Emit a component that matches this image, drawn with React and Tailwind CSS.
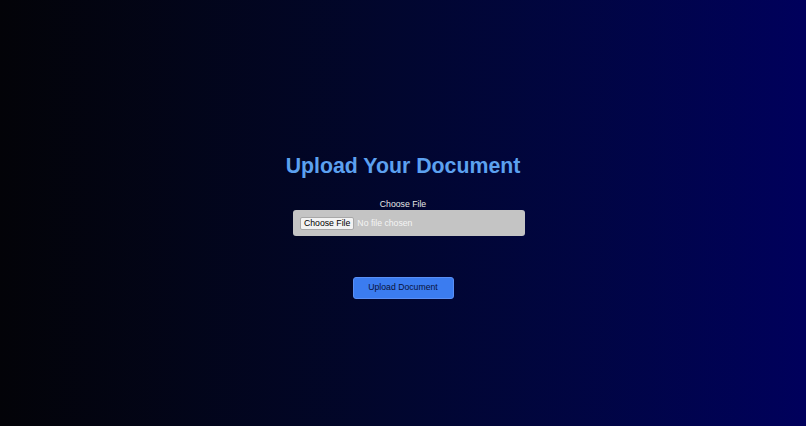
export default function App() {
    return (
        <div className="min-h-screen w-full bg-gradient-to-r from-[#030308] to-[#00005c] flex flex-col items-center justify-center pt-[27px] font-['Liberation_Sans',Arial,sans-serif]">
            <div className="flex flex-col items-center">
                <h1 className="text-[21.3px] leading-[24px] font-bold text-[#5ca1f0]">Upload Your Document</h1>
                <label htmlFor="doc" className="mt-[21px] text-[8.7px] leading-[10px] text-[#e6e6e6]">Choose File</label>
                <input
                    id="doc"
                    type="file"
                    className="mt-[1px] ml-[12px] w-[232px] h-[26px] px-[7px] py-[6.5px] rounded-[3px] bg-[#c4c4c4] text-[8.7px] leading-[13px] text-[#f4f4f4] file:bg-[#f2f2f2] file:text-black file:border file:border-[#a8a8a8] file:rounded-[2px] file:px-[3px] file:h-[13px] file:mr-[3px] file:leading-[11px]"
                />
                <button className="mt-[41px] w-[101px] h-[22px] rounded-[3px] bg-[#3b7cf0] text-[8.7px] text-[#0a1238] border border-[#5a8ff5]">
                    Upload Document
                </button>
            </div>
        </div>
    );
}
